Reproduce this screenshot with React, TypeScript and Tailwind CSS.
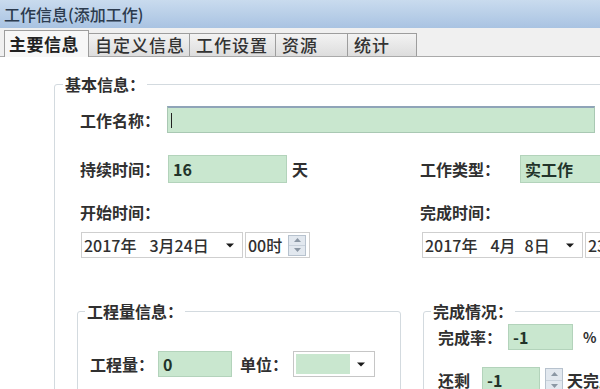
import React from "react";

type BoxProps = { className?: string; children?: React.ReactNode };

function DropArrow() {
  return (
    <svg width="8" height="5" viewBox="0 0 8 5" className="shrink-0">
      <path d="M0 0.5 L8 0.5 L4 4.5 Z" fill="#1a1a1a" />
    </svg>
  );
}

function Field({ className = "", children }: BoxProps) {
  return (
    <div
      className={`flex items-center shrink-0 bg-[#c9e7cf] border border-[#b3d3bb] pl-[4px] text-[#22332a] ${className}`}
    >
      {children}
    </div>
  );
}

function Spinner({ className = "" }: BoxProps) {
  return (
    <div className={`flex flex-col shrink-0 border border-[#b7c2ce] bg-[#e2e8ef] ${className}`}>
      <div className="flex-1 flex items-center justify-center border-b border-[#c8d1db]">
        <svg width="7" height="4" viewBox="0 0 7 4">
          <path d="M0 4 L3.5 0 L7 4 Z" fill="#8b97a4" />
        </svg>
      </div>
      <div className="flex-1 flex items-center justify-center">
        <svg width="7" height="4" viewBox="0 0 7 4">
          <path d="M0 0 L7 0 L3.5 4 Z" fill="#8b97a4" />
        </svg>
      </div>
    </div>
  );
}

function DateBox({ className = "", children }: BoxProps) {
  return (
    <div
      className={`h-[26px] flex items-center shrink-0 border border-[#cfcfcf] bg-white pl-[2px] pr-[8px] ${className}`}
    >
      <div className="flex-1 flex items-center">{children}</div>
      <DropArrow />
    </div>
  );
}

function HourBox({ className = "", children }: BoxProps) {
  return (
    <div
      className={`h-[26px] flex items-center shrink-0 border border-[#cfcfcf] bg-white pl-[2px] pr-[3px] ${className}`}
    >
      <span className="flex-1">{children}</span>
      <Spinner className="w-[18px] h-[21px]" />
    </div>
  );
}

function Select({ className = "" }: BoxProps) {
  return (
    <div className={`flex items-center shrink-0 border border-[#c6c6c6] bg-white p-[2px] ${className}`}>
      <div className="h-full w-[54px] bg-[#c9e7cf]" />
      <div className="flex-1 flex justify-center">
        <DropArrow />
      </div>
    </div>
  );
}

const tabs = [
  { label: "自定义信息", w: "w-[101px]" },
  { label: "工作设置", w: "w-[86px]" },
  { label: "资源", w: "w-[72px]" },
  { label: "统计", w: "w-[69px]" },
];

export default function App() {
  return (
    <div className="w-[600px] h-[389px] overflow-hidden bg-white text-[16px] text-[#303030] font-bold font-['Noto_Sans_CJK_SC','Noto_Sans',sans-serif]">
      {/* title bar */}
      <div className="h-[28px] flex items-center pl-[4px] bg-gradient-to-b from-[#c9dbee] to-[#a9c3e2] text-[#2c3b4e] font-medium leading-none">
        工作信息(添加工作)
      </div>

      {/* tabs */}
      <div className="h-[29px] flex items-end pl-[4px] bg-[#f0f0f0] border-b border-[#aaaaaa]">
        <div className="-mb-px h-[27px] w-[85px] pl-[4px] flex items-center bg-[#f7f7f7] border border-b-0 border-[#9d9d9d] text-[17px] tracking-[0.5px] text-[#222]">
          主要信息
        </div>
        {tabs.map((t) => (
          <div
            key={t.label}
            className={`${t.w} h-[23px] pl-[6px] flex items-center border-t border-r border-[#9d9d9d] bg-gradient-to-b from-[#f3f3f3] to-[#dddddd] text-[17px] tracking-[1px] font-medium text-[#333]`}
          >
            {t.label}
          </div>
        ))}
      </div>

      {/* body */}
      <div className="pl-[54px] pt-[16px]">
        <fieldset className="w-[600px] h-[330px] border border-[#d3dadf] rounded-[3px]">
          <legend className="ml-[8px] px-[2px] leading-[22px]">基本信息：</legend>
          <div className="pl-[22px] pt-[11px]">
            <div className="flex items-center pl-[3px]">
              <span className="w-[87px] shrink-0">工作名称：</span>
              <div className="w-[428px] h-[27px] shrink-0 flex items-center pl-[3px] bg-[#c9e7cf] border border-[#a9c8b3] border-t-2 border-t-[#8fa4b8]">
                <div className="w-px h-[15px] bg-[#222]" />
              </div>
            </div>

            <div className="flex items-center pl-[3px] mt-[22px]">
              <div className="w-[340px] shrink-0 flex items-center">
                <span className="w-[88px] shrink-0">持续时间：</span>
                <Field className="w-[119px] h-[28px]">16</Field>
                <span className="ml-[5px]">天</span>
              </div>
              <span className="w-[100px] shrink-0">工作类型：</span>
              <Field className="w-[100px] h-[28px]">实工作</Field>
            </div>

            <div className="flex pl-[3px] mt-[19px] leading-[20px]">
              <span className="w-[340px] shrink-0">开始时间：</span>
              <span>完成时间：</span>
            </div>

            <div className="flex pl-[3px] mt-[10px] font-medium">
              <div className="w-[340px] shrink-0 flex pl-[1px]">
                <DateBox className="w-[162px]">
                  <span>2017年</span>
                  <span className="ml-[13px]">3月24日</span>
                </DateBox>
                <HourBox className="w-[65px] ml-[2px]">00时</HourBox>
              </div>
              <div className="flex pl-[2px]">
                <DateBox className="w-[161px]">
                  <span>2017年</span>
                  <span className="ml-[13px]">4月</span>
                  <span className="ml-[9px]">8日</span>
                </DateBox>
                <HourBox className="w-[65px] ml-[2px]">23时</HourBox>
              </div>
            </div>

            <div className="flex mt-[42px]">
              <fieldset className="w-[324px] h-[100px] shrink-0 border border-[#d3dadf] rounded-[3px]">
                <legend className="ml-[7px] px-[2px] leading-[22px]">工程量信息：</legend>
                <div className="flex items-center pl-[12px] pt-[29px]">
                  <span className="w-[68px] shrink-0">工程量：</span>
                  <Field className="w-[74px] h-[26px]">0</Field>
                  <span className="ml-[8px] w-[53px] shrink-0">单位：</span>
                  <Select className="w-[82px] h-[26px]" />
                </div>
              </fieldset>

              <fieldset className="ml-[22px] w-[300px] h-[100px] shrink-0 border border-[#d3dadf] rounded-[3px]">
                <legend className="ml-[7px] px-[2px] leading-[22px]">完成情况：</legend>
                <div className="pl-[14px] pt-[2px]">
                  <div className="flex items-center">
                    <span className="w-[70px] shrink-0">完成率：</span>
                    <Field className="w-[65px] h-[26px]">-1</Field>
                    <span className="ml-[10px] text-[14px]">%</span>
                  </div>
                  <div className="flex items-center mt-[17px]">
                    <span className="w-[44px] shrink-0">还剩</span>
                    <Field className="w-[58px] h-[26px]">-1</Field>
                    <Spinner className="ml-[5px] w-[18px] h-[24px]" />
                    <span className="ml-[4px] whitespace-nowrap">天完成</span>
                  </div>
                </div>
              </fieldset>
            </div>
          </div>
        </fieldset>
      </div>
    </div>
  );
}
